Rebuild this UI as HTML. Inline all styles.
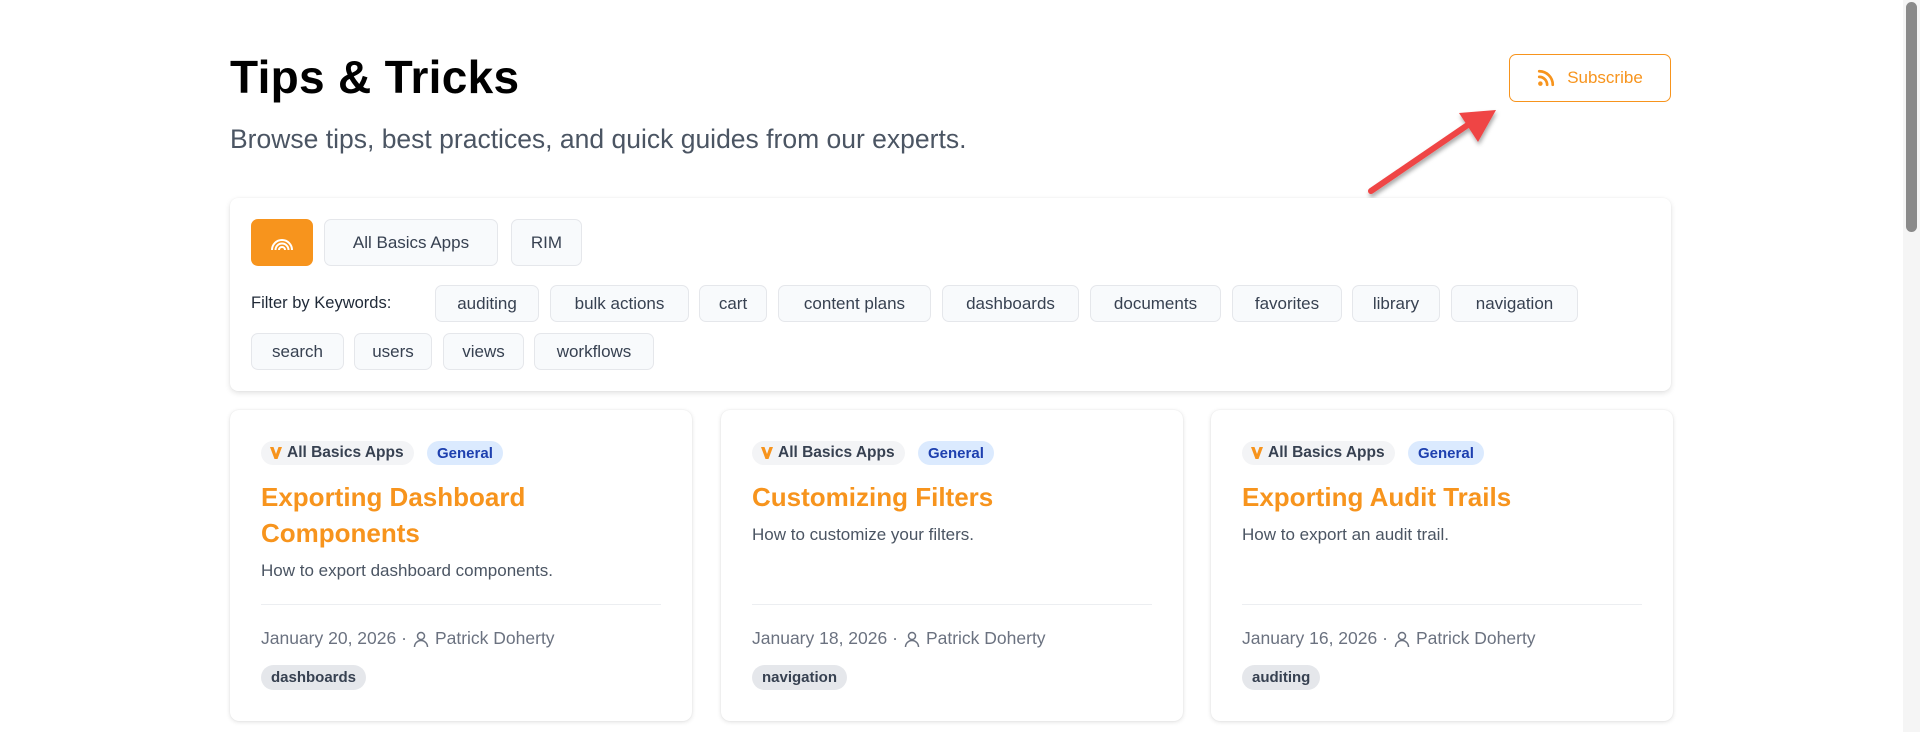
<!DOCTYPE html>
<html><head><meta charset="utf-8"><style>
*{box-sizing:border-box;margin:0;padding:0}
body{width:1920px;height:732px;overflow:hidden;background:#fff;font-family:"Liberation Sans",sans-serif;position:relative}
.abs{position:absolute}
h1{position:absolute;left:230px;top:50px;font-size:46px;font-weight:700;color:#000;letter-spacing:0.3px}
.sub{position:absolute;left:230px;top:124px;font-size:26.5px;color:#4b5563}
.subscribe{position:absolute;left:1509px;top:54px;width:162px;height:48px;border:1.5px solid #f7941d;border-radius:7px;color:#f7941d;font-size:17px;display:flex;align-items:center;justify-content:center;gap:12px}
.panel{position:absolute;left:230px;top:198px;width:1441px;height:193px;border-radius:8px;box-shadow:0 2px 6px rgba(0,0,0,.12),0 0 1px rgba(0,0,0,.08);background:#fff}
.btn{position:absolute;height:47px;top:21px;border:1px solid #e5e7eb;border-radius:7px;background:#f8fafc;color:#374151;font-size:17px;display:flex;align-items:center;justify-content:center}
.pill{position:absolute;height:37px;border:1px solid #e5e7eb;border-radius:7px;background:#f8fafc;color:#374151;font-size:17px;display:flex;align-items:center;justify-content:center}
.lbl{position:absolute;left:21px;top:96px;font-size:16.5px;color:#1f2937}
.card{position:absolute;top:410px;width:462px;height:311px;border-radius:9px;box-shadow:0 1px 5px rgba(0,0,0,.12),0 0 1px rgba(0,0,0,.1);background:#fff}
.b1{position:absolute;left:31px;top:31px;height:24px;padding:0 10px 0 8px;border-radius:12px;background:#f3f4f6;color:#374151;font-size:15.5px;font-weight:700;display:flex;align-items:center;gap:4px}
.b2{position:absolute;top:31px;height:24px;padding:0 10px;border-radius:12px;background:#dbeafe;color:#1e40af;font-size:15px;font-weight:700;display:flex;align-items:center}
.ttl{position:absolute;left:31px;top:69px;width:330px;font-size:26px;line-height:36px;font-weight:700;color:#f7941d}
.desc{position:absolute;left:31px;font-size:17px;color:#4b5563}
.hr{position:absolute;left:31px;top:194px;width:400px;border-top:1px solid #eceef1}
.meta{position:absolute;left:31px;top:218px;font-size:17.5px;color:#6b7280;display:flex;align-items:center;gap:5px}
.tag{position:absolute;left:31px;top:255px;height:25px;padding:0 10px;border-radius:13px;background:#e5e7eb;color:#374151;font-size:15px;font-weight:700;display:flex;align-items:center}
</style></head><body>
<h1>Tips &amp; Tricks</h1>
<div class="sub">Browse tips, best practices, and quick guides from our experts.</div>
<div class="subscribe"><svg width="18" height="18" viewBox="0 0 16 16"><circle cx="3" cy="13" r="2" fill="#f7941d"/><path d="M2 7a7 7 0 0 1 7 7M2 2a12 12 0 0 1 12 12" stroke="#f7941d" stroke-width="2.4" fill="none" stroke-linecap="round"/></svg>Subscribe</div>
<svg class="abs" style="left:1360px;top:100px" width="150" height="105" viewBox="0 0 150 105"><defs><filter id="s"><feDropShadow dx="1" dy="3" stdDeviation="2" flood-opacity=".35"/></filter></defs><g filter="url(#s)"><line x1="11" y1="91" x2="115" y2="20" stroke="#ef4444" stroke-width="6" stroke-linecap="round"/><polygon points="136,10 99,13 118,42" fill="#ef4444"/></g></svg>
<div class="panel">
<div class="btn" style="left:21px;width:62px;background:#f7941d;border-color:#f7941d"><svg width="24" height="14" viewBox="0 0 24 14"><path d="M2 14a10 10 0 0 1 20 0M5.5 14a6.5 6.5 0 0 1 13 0M9 14a3 3 0 0 1 6 0" stroke="#fff" stroke-width="2" fill="none"/></svg></div>
<div class="btn" style="left:94px;width:174px">All Basics Apps</div>
<div class="btn" style="left:281px;width:71px">RIM</div>
<div class="lbl">Filter by Keywords:</div>
<div class="pill" style="top:87px;left:205px;width:104px">auditing</div>
<div class="pill" style="top:87px;left:320px;width:139px">bulk actions</div>
<div class="pill" style="top:87px;left:469px;width:68px">cart</div>
<div class="pill" style="top:87px;left:548px;width:153px">content plans</div>
<div class="pill" style="top:87px;left:712px;width:137px">dashboards</div>
<div class="pill" style="top:87px;left:860px;width:131px">documents</div>
<div class="pill" style="top:87px;left:1002px;width:110px">favorites</div>
<div class="pill" style="top:87px;left:1122px;width:88px">library</div>
<div class="pill" style="top:87px;left:1221px;width:127px">navigation</div>
<div class="pill" style="top:135px;left:21px;width:93px">search</div>
<div class="pill" style="top:135px;left:124px;width:78px">users</div>
<div class="pill" style="top:135px;left:213px;width:81px">views</div>
<div class="pill" style="top:135px;left:304px;width:120px">workflows</div>
</div>

<div class="card" style="left:230px">
<div class="b1"><svg width="14" height="14" viewBox="0 0 14 14"><path d="M1 1h3.5L7 8l2.5-7H13L8.5 13h-3z" fill="#f7941d"/></svg>All Basics Apps</div>
<div class="b2" style="left:197px">General</div>
<div class="ttl">Exporting Dashboard Components</div>
<div class="desc" style="top:151px">How to export dashboard components.</div>
<div class="hr"></div>
<div class="meta">January 20, 2026 · <svg width="18" height="18" viewBox="0 0 18 18"><circle cx="9" cy="6" r="3.5" stroke="#6b7280" stroke-width="1.5" fill="none"/><path d="M2.5 17a6.5 6.5 0 0 1 13 0" stroke="#6b7280" stroke-width="1.5" fill="none"/></svg>Patrick Doherty</div>
<div class="tag">dashboards</div>
</div>

<div class="card" style="left:721px">
<div class="b1"><svg width="14" height="14" viewBox="0 0 14 14"><path d="M1 1h3.5L7 8l2.5-7H13L8.5 13h-3z" fill="#f7941d"/></svg>All Basics Apps</div>
<div class="b2" style="left:197px">General</div>
<div class="ttl">Customizing Filters</div>
<div class="desc" style="top:115px">How to customize your filters.</div>
<div class="hr"></div>
<div class="meta">January 18, 2026 · <svg width="18" height="18" viewBox="0 0 18 18"><circle cx="9" cy="6" r="3.5" stroke="#6b7280" stroke-width="1.5" fill="none"/><path d="M2.5 17a6.5 6.5 0 0 1 13 0" stroke="#6b7280" stroke-width="1.5" fill="none"/></svg>Patrick Doherty</div>
<div class="tag">navigation</div>
</div>

<div class="card" style="left:1211px">
<div class="b1"><svg width="14" height="14" viewBox="0 0 14 14"><path d="M1 1h3.5L7 8l2.5-7H13L8.5 13h-3z" fill="#f7941d"/></svg>All Basics Apps</div>
<div class="b2" style="left:197px">General</div>
<div class="ttl">Exporting Audit Trails</div>
<div class="desc" style="top:115px">How to export an audit trail.</div>
<div class="hr"></div>
<div class="meta">January 16, 2026 · <svg width="18" height="18" viewBox="0 0 18 18"><circle cx="9" cy="6" r="3.5" stroke="#6b7280" stroke-width="1.5" fill="none"/><path d="M2.5 17a6.5 6.5 0 0 1 13 0" stroke="#6b7280" stroke-width="1.5" fill="none"/></svg>Patrick Doherty</div>
<div class="tag">auditing</div>
</div>

<div class="abs" style="left:1903px;top:0;width:17px;height:732px;background:#f5f5f5"></div>
<div class="abs" style="left:1906px;top:2px;width:11px;height:230px;background:#8a8a8a;border-radius:6px"></div>
</body></html>
